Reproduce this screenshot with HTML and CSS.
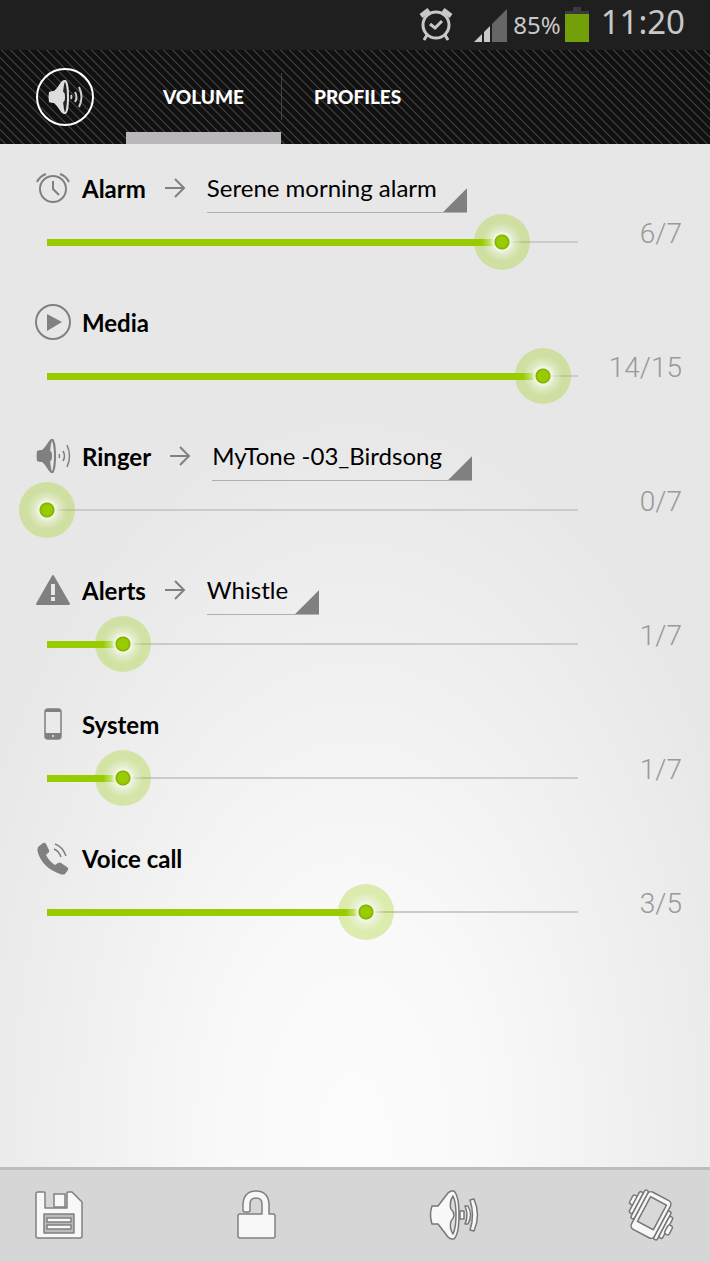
FILE: index.html
```html
<!DOCTYPE html>
<html lang="en">
<head>
    <meta charset="UTF-8">
    <meta name="viewport" content="width=device-width, initial-scale=1.0">
    <title>Volume</title>
    <link rel="stylesheet" href="styles.css">
</head>
<body>
    <div class="status-bar">
        <svg class="status-alarm" viewBox="0 0 34 34" fill="none" stroke="#c8c8c8">
            <circle cx="17" cy="18" r="13" stroke-width="3"/>
            <path d="M11 17l5 4 7-7" stroke-width="3"/>
            <path d="M2 9l8-6M24 3l8 6" stroke-width="5"/>
            <path d="M8 28l-3 5M26 28l3 5" stroke-width="3"/>
        </svg>
        <svg class="status-signal" viewBox="0 0 33 33">
            <path d="M0 33L8 25V33Z" fill="#c8c8c8"/>
            <path d="M10 33V23L16 17V33Z" fill="#c8c8c8"/>
            <path d="M18 33V15L33 0V33Z" fill="#666"/>
        </svg>
        <span class="status-percent">85%</span>
        <svg class="status-battery" viewBox="0 0 24 35">
            <path d="M8 0h8v4h8v4H0V4h8Z" fill="#3a3a3a"/>
            <path d="M0 7h24v28H0Z" fill="#74a00a"/>
        </svg>
        <span class="status-time">11:20</span>
    </div>

    <header class="header">
        <svg class="logo" viewBox="0 0 58 58">
            <circle cx="29" cy="29" r="28" fill="none" stroke="#fff" stroke-width="2"/>
            <path d="M13 24q2-1 5-1c4-3 5-7 8-10q3-2 4 0v32q-1 2-4 0c-3-3-4-7-8-10q-3 0-5-1-1-5 0-10Z" fill="#ddd"/>
            <ellipse cx="29" cy="29" rx="3" ry="16" fill="#222" stroke="#ddd" stroke-width="2"/>
            <ellipse cx="27" cy="29" rx="2" ry="5" fill="#ddd"/>
            <path d="M35 27q1 2 0 4M39 24q3 5 0 10M43 19q5 10 0 20" fill="none" stroke="#ccc" stroke-width="2"/>
        </svg>
        <nav class="tabs">
            <a class="tab active" href="#volume">VOLUME</a>
            <a class="tab" href="#profiles">PROFILES</a>
        </nav>
    </header>

    <main class="channels" id="volume">
        <section class="channel">
            <div class="channel-head">
                <svg class="icon" viewBox="0 0 36 36" fill="none" stroke="#808080" stroke-width="2">
                    <circle cx="18" cy="19" r="13"/>
                    <path d="M18 11v8l6 6M2 12q3-6 9-8M34 12q-3-6-9-8"/>
                </svg>
                <label for="alarm">Alarm</label>
                <svg class="arrow" viewBox="0 0 22 20"><path d="M1 10h19M11 1l9 9-9 9"/></svg>
                <select aria-label="Alarm sound"><option>Serene morning alarm</option></select>
            </div>
            <input type="range" id="alarm" min="0" max="7" value="6" style="--level: 0.857">
            <output class="value" for="alarm">6/7</output>
        </section>

        <section class="channel">
            <div class="channel-head">
                <svg class="icon" viewBox="0 0 36 36">
                    <circle cx="18" cy="18" r="17" fill="none" stroke="#808080" stroke-width="2"/>
                    <path d="M12 10l15 8-15 9Z" fill="#808080"/>
                </svg>
                <label for="media">Media</label>
            </div>
            <input type="range" id="media" min="0" max="15" value="14" style="--level: 0.933">
            <output class="value" for="media">14/15</output>
        </section>

        <section class="channel">
            <div class="channel-head">
                <svg class="icon" viewBox="0 0 36 36">
                    <path d="M2 13q2-1 5-1c4-3 5-7 8-10q3-2 4 0v32q-1 2-4 0c-3-3-4-7-8-10q-3 0-5-1-1-5 0-10Z" fill="#808080"/>
                    <ellipse cx="17" cy="18" rx="3" ry="16" fill="#e7e7e7" stroke="#808080" stroke-width="2"/>
                    <ellipse cx="15" cy="18" rx="2" ry="5" fill="#808080"/>
                    <path d="M24 16q1 2 0 4M28 13q3 5 0 10M32 7q5 11 0 22" fill="none" stroke="#808080" stroke-width="1.5"/>
                </svg>
                <label for="ringer">Ringer</label>
                <svg class="arrow" viewBox="0 0 22 20"><path d="M1 10h19M11 1l9 9-9 9"/></svg>
                <select aria-label="Ringer sound"><option>MyTone -03_Birdsong</option></select>
            </div>
            <input type="range" id="ringer" min="0" max="7" value="0" style="--level: 0">
            <output class="value" for="ringer">0/7</output>
        </section>

        <section class="channel">
            <div class="channel-head">
                <svg class="icon" viewBox="0 0 36 36">
                    <path d="M18 4L34 32H2Z" fill="#808080" stroke="#808080" stroke-width="2" stroke-linejoin="round"/>
                    <path d="M16 12h4v11h-4ZM16 25h4v4h-4Z" fill="#e8e8e8"/>
                </svg>
                <label for="alerts">Alerts</label>
                <svg class="arrow" viewBox="0 0 22 20"><path d="M1 10h19M11 1l9 9-9 9"/></svg>
                <select aria-label="Alerts sound"><option>Whistle</option></select>
            </div>
            <input type="range" id="alerts" min="0" max="7" value="1" style="--level: 0.143">
            <output class="value" for="alerts">1/7</output>
        </section>

        <section class="channel">
            <div class="channel-head">
                <svg class="icon" viewBox="0 0 36 36">
                    <rect x="10" y="3" width="16" height="30" rx="3" fill="none" stroke="#808080" stroke-width="1.5"/>
                    <path d="M10 6q0-3 3-3h10q3 0 3 3ZM10 27h16v3q0 3-3 3H13q-3 0-3-3Z" fill="#808080"/>
                    <circle cx="18" cy="30" r="1" fill="#eee"/>
                </svg>
                <label for="system">System</label>
            </div>
            <input type="range" id="system" min="0" max="7" value="1" style="--level: 0.143">
            <output class="value" for="system">1/7</output>
        </section>

        <section class="channel">
            <div class="channel-head">
                <svg class="icon" viewBox="0 0 36 36">
                    <path d="M3 7l5-4q2-1 3 1l3 6q1 2-1 3l-2 2q3 6 9 10l3-2q1-1 3 0l6 4q2 1 1 3l-3 4q-2 1-5 0Q8 28 3 13Q2 9 3 7Z" fill="#808080"/>
                    <path d="M19 9q5 2 7 8M20 4q8 3 11 12" fill="none" stroke="#808080" stroke-width="1.5"/>
                </svg>
                <label for="voice">Voice call</label>
            </div>
            <input type="range" id="voice" min="0" max="5" value="3" style="--level: 0.6">
            <output class="value" for="voice">3/5</output>
        </section>
    </main>

    <footer class="toolbar">
        <button type="button" aria-label="Save">
            <svg viewBox="0 0 50 50" fill="#f8f8f8" stroke="#808080" stroke-width="1.5" stroke-linejoin="round">
                <path d="M4 2h6q1 0 1 1v15h22V3q0-1 1-1h4l10 10v34q0 2-2 2H4q-2 0-2-2V4q0-2 2-2Z"/>
                <rect x="20" y="4" width="11" height="13"/>
                <rect x="10" y="24" width="30" height="19" fill="#bbb"/>
                <path d="M13 28h24v4H13ZM13 35h24v4H13Z"/>
            </svg>
        </button>
        <button type="button" aria-label="Unlock">
            <svg viewBox="0 0 50 50" fill="#f8f8f8" stroke="#808080" stroke-width="1.5" stroke-linejoin="round">
                <path d="M9 24h22V14q0-6-6-6t-6 6v6q0 2-2 2h-3q-2 0-2-2v-6Q13 1 25 1t13 13v10h4q2 0 2 2v20q0 2-2 2H9q-2 0-2-2V26q0-2 2-2Z"/>
            </svg>
        </button>
        <button type="button" aria-label="Sound">
            <svg viewBox="0 0 50 50" fill="#f8f8f8" stroke="#777" stroke-width="1.5" stroke-linejoin="round">
                <path d="M3 16h6L19 3q2-2 4-2h2q5 5 5 24t-5 24h-2q-2 0-4-2L9 34H3q-3-9 0-18Z"/>
                <path d="M24 6q-4 6-2 13 3 3 3 6t-3 6q-2 7 2 13 3-6 3-19T24 6Z" fill="#ddd"/>
                <path d="M31 21h4v8h-4Z"/>
                <path d="M36 16h3q5 9 0 18h-3q4-9 0-18ZM41 10l4-1q7 16 0 32l-4-1q5-15 0-30Z"/>
            </svg>
        </button>
        <button type="button" aria-label="Vibrate">
            <svg viewBox="0 0 50 50" fill="#f8f8f8" stroke="#777" stroke-width="1.5" stroke-linejoin="round">
                <g transform="rotate(28 25 25)">
                    <rect x="0" y="15" width="5" height="10" rx="2"/>
                    <rect x="4" y="9" width="4" height="24" rx="2"/>
                    <rect x="8" y="5" width="4" height="32" rx="2"/>
                    <rect x="38" y="13" width="4" height="32" rx="2"/>
                    <rect x="42" y="17" width="4" height="24" rx="2"/>
                    <rect x="45" y="25" width="5" height="10" rx="2"/>
                    <rect x="12" y="4" width="26" height="42" rx="4"/>
                    <rect x="16" y="9" width="18" height="28" fill="#d8d8d8"/>
                </g>
            </svg>
        </button>
    </footer>

    <script>
        // Keep the filled track and the counter in step with each slider
        document.querySelectorAll('input[type="range"]').forEach(input => {
            input.addEventListener('input', () => {
                input.style.setProperty('--level', input.value / input.max);
                document.querySelector(`output[for="${input.id}"]`).textContent = `${input.value}/${input.max}`;
            });
        });
    </script>
</body>
</html>
```
FILE: styles.css
```css
* {
    box-sizing: border-box;
}
body {
    display: flex;
    flex-direction: column;
    min-height: 100vh;
    margin: 0;
    font-family: Lato, "Noto Sans", sans-serif;
    color: #000;
    background: #e7e7e7;
}

/* Status bar */
.status-bar {
    display: flex;
    align-items: center;
    justify-content: flex-end;
    height: 50px;
    padding: 0 25px 2px 0;
    background: #1f1f1f;
    color: #c8c8c8;
    font-family: "Noto Sans", sans-serif;
}
.status-alarm {
    width: 34px;
    height: 34px;
    margin-right: 21px;
}
.status-signal {
    align-self: flex-end;
    width: 33px;
    height: 33px;
    margin: 0 6px 6px 0;
}
.status-percent {
    margin-right: 4px;
    font-size: 24px;
}
.status-battery {
    width: 24px;
    height: 35px;
    margin-right: 12px;
}
.status-time {
    padding-bottom: 4px;
    font-size: 33px;
    line-height: 44px;
}

/* Header */
.header {
    display: flex;
    align-items: center;
    height: 94px;
    padding-left: 36px;
    background: linear-gradient(45deg, #363636 0 14%, #111 14% 50%, #363636 50% 64%, #111 64%) 0 0 / 9px 9px;
}
.logo {
    width: 58px;
    height: 58px;
    margin-right: 32px;
}
.tabs {
    display: flex;
    align-self: stretch;
}
.tab {
    display: flex;
    align-items: center;
    padding: 10px 37px 0;
    border-bottom: 12px solid transparent;
    color: #fff;
    font-size: 19px;
    font-weight: 900;
    text-decoration: none;
}
.tab.active {
    border-color: #b9b7b9;
}
.tab + .tab {
    padding-left: 33px;
    background: linear-gradient(#444, #444) 0 23px / 1px 47px no-repeat;
}

/* Volume channels */
.channels {
    flex: 1;
    display: flex;
    flex-direction: column;
    gap: 27px;
    padding: 19px 28px 19px 19px;
    background: radial-gradient(ellipse 60% 72% at 50% 97%, #fcfcfc, #f9f9f9 30%, #e7e7e7);
}
.channel {
    display: grid;
    grid-template-columns: 1fr 76px;
}
.channel-head {
    grid-column: 1 / -1;
    display: flex;
    align-items: center;
    height: 50px;
    margin-bottom: 1px;
    padding-left: 16px;
    font-size: 24px;
}
.icon {
    width: 36px;
    height: 36px;
    margin-right: 11px;
}
.channel-head label {
    font-weight: bold;
}
.arrow {
    width: 22px;
    height: 20px;
    margin: 0 21px 0 18px;
    fill: none;
    stroke: #808080;
    stroke-width: 2;
}
select {
    appearance: none;
    height: 50px;
    padding: 0 30px 0 0;
    border: 0;
    border-bottom: 1px solid #b0b0b0;
    border-radius: 0;
    background: linear-gradient(to bottom right, transparent 49%, #808080 52%) right bottom / 24px 24px no-repeat;
    color: #000;
    font: inherit;
}

/* Sliders */
input[type="range"] {
    appearance: none;
    width: 100%;
    height: 56px;
    margin: 0;
    background: none;
}
input[type="range"]::-webkit-slider-runnable-track {
    height: 56px;
    background:
        linear-gradient(#9c0, #9c0) 28px 50% / calc((100% - 56px) * var(--level)) 7px no-repeat,
        linear-gradient(#cbcbcb, #cbcbcb) 28px 50% / calc(100% - 56px) 2px no-repeat;
}
input[type="range"]::-webkit-slider-thumb {
    appearance: none;
    width: 56px;
    height: 56px;
    border-radius: 50%;
    background: radial-gradient(circle, #9c0 5px, #80b000 7px, #f4f8e8 8px, rgba(220, 236, 180, 0.6) 12px, rgba(153, 204, 0, 0.3) 20px);
}
.value {
    color: #999;
    font-family: Roboto, sans-serif;
    font-size: 28px;
    font-weight: 300;
    line-height: 40px;
    text-align: right;
}

/* Bottom toolbar */
.toolbar {
    display: flex;
    justify-content: space-between;
    align-items: center;
    height: 95px;
    padding: 0 34px 2px;
    border-top: 3px solid #bcbcbc;
    background: #d6d6d6;
}
.toolbar button {
    width: 50px;
    height: 50px;
    padding: 0;
    border: 0;
    background: none;
}
.toolbar svg {
    display: block;
    width: 50px;
    height: 50px;
    overflow: visible;
}
```
